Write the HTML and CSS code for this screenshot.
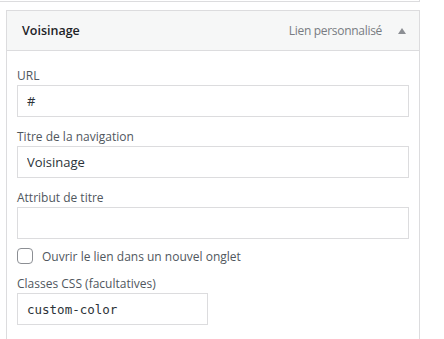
FILE: index.html
```html
<!DOCTYPE html>
<html lang="fr">
<head>
    <meta charset="UTF-8">
    <meta name="viewport" content="width=device-width, initial-scale=1.0">
    <title>Voisinage</title>
    <link rel="stylesheet" href="styles.css">
</head>
<body>
    <div class="prev-item"></div>

    <div class="menu-item">
        <div class="item-bar">
            <span class="item-title">Voisinage</span>
            <span class="item-type">Lien personnalisé</span>
            <span class="item-toggle"></span>
        </div>

        <div class="item-settings">
            <div class="field">
                <label>URL</label>
                <input type="text" class="wide" value="#">
            </div>
            <div class="field">
                <label>Titre de la navigation</label>
                <input type="text" class="wide" value="Voisinage">
            </div>
            <div class="field">
                <label>Attribut de titre</label>
                <input type="text" class="wide" value="">
            </div>
            <div class="field check-row">
                <span class="checkbox"></span>
                <span>Ouvrir le lien dans un nouvel onglet</span>
            </div>
            <div class="field">
                <label>Classes CSS (facultatives)</label>
                <input type="text" class="code" value="custom-color">
            </div>
        </div>
    </div>
</body>
</html>
```

FILE: styles.css
```css
body {
    margin: 0;
    background: #fff;
    font-family: "Open Sans", "Noto Sans", sans-serif;
    font-size: 12px;
    color: #50575e;
}
.prev-item {
    width: 419px;
    height: 1px;
    border-right: 1px solid #dcdcde;
    border-bottom: 1px solid #dcdcde;
}
.menu-item {
    width: 412px;
    margin: 8px 0 0 6px;
    border: 1px solid #dcdcde;
    border-bottom: none;
}
.item-bar {
    display: flex;
    align-items: center;
    height: 39px;
    padding: 0 0 0 15px;
    background: #f6f7f7;
    border-bottom: 1px solid #dcdcde;
}
.item-title {
    flex: 1;
    font-size: 12.5px;
    font-weight: 600;
    color: #1d2327;
}
.item-type {
    color: #787c82;
    letter-spacing: -0.3px;
}
.item-toggle {
    width: 0;
    height: 0;
    margin: 0 13px 0 16px;
    border-left: 4px solid transparent;
    border-right: 4px solid transparent;
    border-bottom: 6px solid #8c8f94;
}
.item-settings {
    padding: 16px 10px 10px 10px;
}
.field {
    margin-bottom: 11px;
}
.field label {
    display: block;
    line-height: 18px;
}
input[type="text"] {
    display: block;
    box-sizing: border-box;
    height: 32px;
    padding: 0 9px;
    border: 1px solid #dcdcde;
    border-radius: 0;
    font-family: "Open Sans", "Noto Sans", sans-serif;
    font-size: 13px;
    color: #2c3338;
    background: #fff;
    outline: none;
}
input.wide {
    width: 392px;
}
input.code {
    width: 191px;
    font-family: "DejaVu Sans Mono", monospace;
    font-size: 12.5px;
}
.check-row {
    display: flex;
    align-items: center;
    gap: 9px;
    height: 16px;
    margin: -2px 0 11px 0;
}
.checkbox {
    box-sizing: border-box;
    width: 16px;
    height: 16px;
    border: 1px solid #8c8f94;
    border-radius: 4px;
    background: #fff;
}
```
